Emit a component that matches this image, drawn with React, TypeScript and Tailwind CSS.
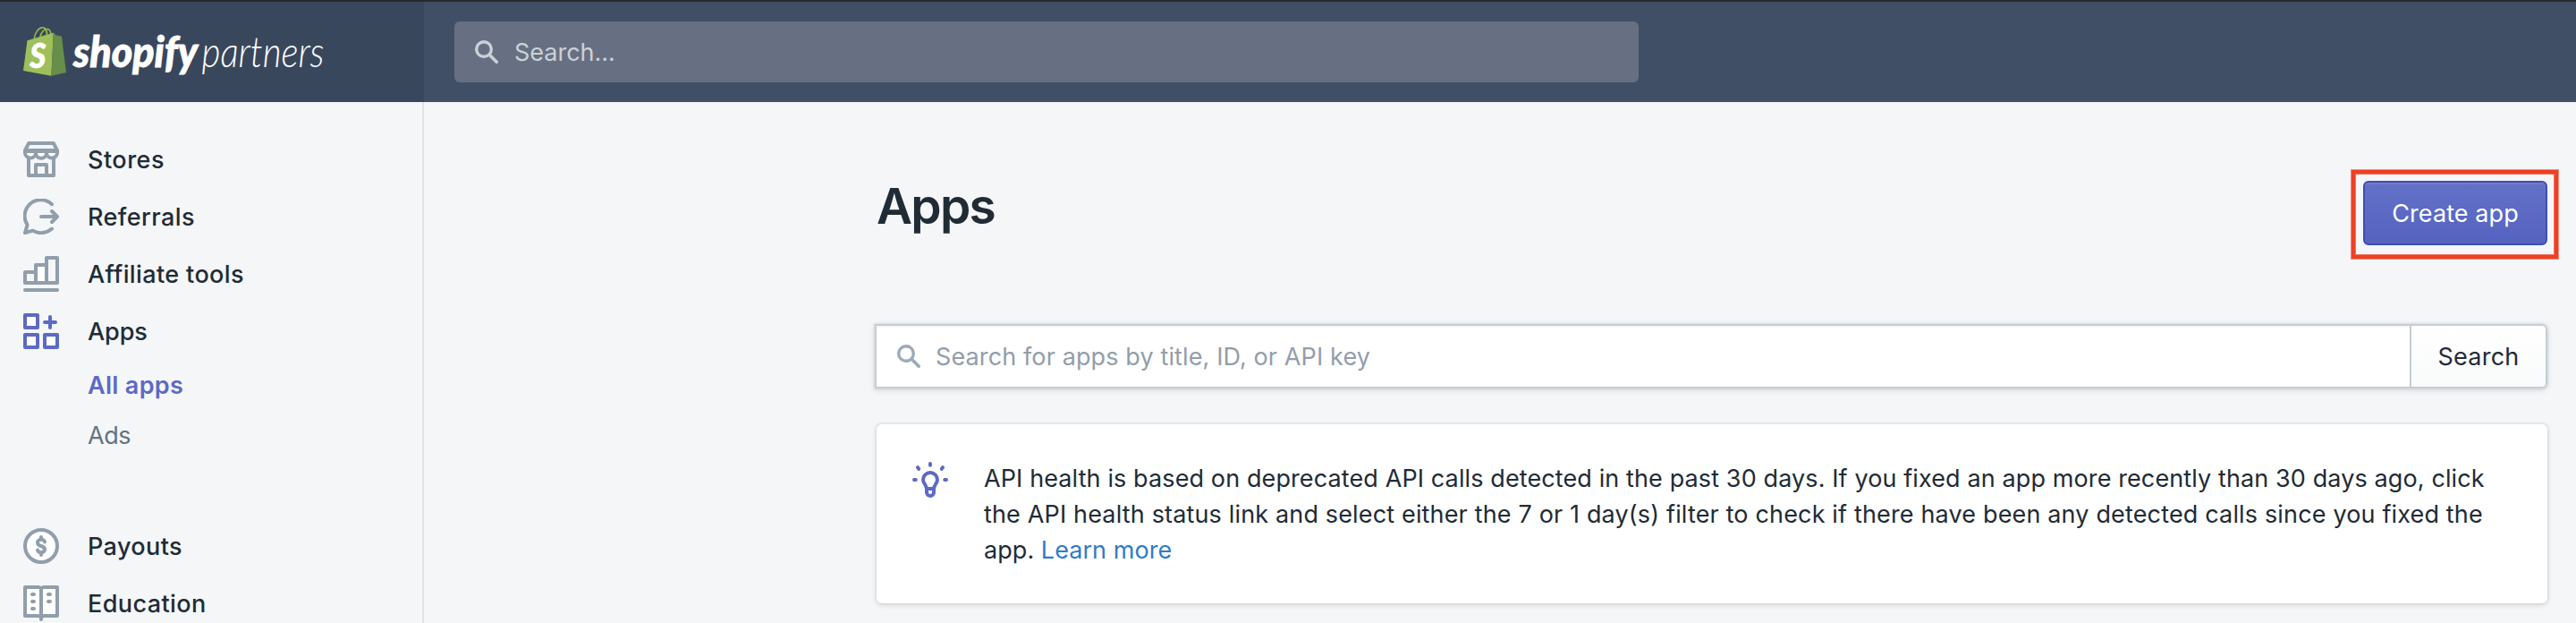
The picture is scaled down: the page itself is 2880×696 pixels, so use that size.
import type { ReactNode } from "react";

function Icon({ children, className = "" }: { children: ReactNode; className?: string }) {
  return (
    <svg
      viewBox="0 0 20 20"
      fill="none"
      stroke="currentColor"
      strokeWidth="2"
      strokeLinecap="round"
      strokeLinejoin="round"
      className={`size-10 shrink-0 ${className}`}
    >
      {children}
    </svg>
  );
}

function StoreIcon() {
  return (
    <Icon>
      <path d="M3 9v10h14V9" />
      <path d="M7 19v-6h6v6" />
      <path d="M1 5.5V6a3 3 0 0 0 6 .4 3 3 0 0 0 6 0A3 3 0 0 0 19 6v-.5z" fill="#fff" />
      <path d="M3.1 1h13.8L19 5H1z" fill="#f4f6f8" />
    </Icon>
  );
}

function ReferralIcon() {
  return (
    <Icon>
      <path d="M16 3.1A9 9 0 0 0 2.3 14.6L1 19l4.4-1.2A9 9 0 0 0 16 16.8" />
      <path d="M10 10h8.5M16 7l3 3-3 3" />
    </Icon>
  );
}

function BarsIcon() {
  return (
    <Icon>
      <path d="M1 9h6v6H1z" />
      <path d="M7 5h6v10H7z" fill="#fff" />
      <path d="M13 1h6v14h-6z" />
      <path d="M1 19h18" />
    </Icon>
  );
}

function AppsIcon() {
  return (
    <Icon className="text-[#5c6ac4]">
      <path d="M1 1h7v7H1zM1 12h7v7H1zM12 12h7v7h-7z" fill="#fff" />
      <path d="M15 2v6M12 5h6" />
    </Icon>
  );
}

function PayoutIcon() {
  return (
    <Icon>
      <circle cx="10" cy="10" r="9" fill="#fff" />
      <path d="M12 7.7C11.7 6.9 11 6.4 10 6.4c-1.200 0-2 .7-2 1.700 0 2.500 4 1.300 4 3.800 0 1-.8 1.700-2 1.700-1 0-1.700-.5-2-1.300M10 5v1.200M10 13.800V15" />
    </Icon>
  );
}

function BookIcon() {
  return (
    <Icon>
      <path d="M1 1h7.500q1 0 1.500.8.5-.8 1.500-.8H19v16h-7.500q-1 0-1.500 1-.5-1-1.500-1H1z" fill="#fff" />
      <path d="M10 2v17M5 5h1M5 9h1M5 13h1M14 5h1M14 9h1" />
    </Icon>
  );
}

function BulbIcon() {
  return (
    <Icon className="mt-0.5 text-[#5c6ac4]">
      <path d="M1 10h.9M18.100 10h.9M10 1v.9M3 3.100l.6.8M17 3.100l-.6.8" />
      <path d="M8 15c0-2-2-3-2-5a4 4 0 0 1 8 0c0 2-2 3-2 5z" />
      <path d="M8 15v2a2 2 0 0 0 4 0v-2" />
    </Icon>
  );
}

function SearchIcon({ className }: { className: string }) {
  return (
    <svg viewBox="0 0 26 26" fill="none" stroke="currentColor" strokeLinecap="round" className={`size-[26px] shrink-0 ${className}`}>
      <circle cx="10" cy="10" r="8.300" strokeWidth="3.400" />
      <path d="M16.500 16.500l7.700 7.700" strokeWidth="3.600" />
    </svg>
  );
}

function Logo() {
  return (
    <svg viewBox="0 0 420 84" className="h-[84px] w-[420px]" fill="#fff">
      <g transform="translate(-20 -12)">
        <path
          d="M38.200 43c.8-6 5-12.200 9.300-12.200 3.500 0 5 3.400 5 7.500M44.800 41.500c.8-4.800 4.300-9 7.700-9 2.600 0 4 2.500 4.300 5.200M52.300 40c.2-3.500-.2-6-1.700-7.500"
          fill="none"
          stroke="#95bf47"
          strokeWidth="1.600"
        />
        <path d="M30.500 45.300L59.800 36.600 57.400 84.800 26 79z" fill="#9fbf5a" />
        <path d="M59.800 36.600L62.400 39.300 68.900 40.500 74 81.100 57.400 84.800z" fill="#688e49" />
        <text x="33.200" y="75.600" fontSize="38" textLength="18" lengthAdjust="spacingAndGlyphs" stroke="#fff" strokeWidth="0.800" className="font-['Lato',sans-serif] font-black italic">
          S
        </text>
        <text x="82" y="75.300" fontSize="48" textLength="139" lengthAdjust="spacingAndGlyphs" stroke="#fff" strokeWidth="0.900" className="font-['Lato',sans-serif] font-black italic">
          shopify
        </text>
        <text x="225.500" y="75.300" fontSize="47" textLength="137" lengthAdjust="spacingAndGlyphs" className="font-['Lato',sans-serif] font-light italic">
          partners
        </text>
      </g>
    </svg>
  );
}

function NavItem({ icon, children, className }: { icon: ReactNode; children: string; className: string }) {
  return (
    <a className="flex h-16 items-center gap-8 pl-[26px] text-[#919eab]">
      {icon}
      <span className={`pt-0.5 font-medium text-[#212b36] ${className}`}>{children}</span>
    </a>
  );
}

export default function App() {
  return (
    <div className="flex h-[696px] w-[2880px] flex-col overflow-hidden bg-[#f4f6f8] font-['Inter',sans-serif] text-[27px] leading-10 text-[#212b36]">
      <header className="flex h-[114px] shrink-0 border-t-2 border-[#292929] bg-[#414f66]">
        <div className="flex w-[474px] items-start bg-[#39475d] pt-2.5 pl-5">
          <Logo />
        </div>
        <div className="mt-[22px] ml-[34px] flex h-[68px] w-[1324px] items-center rounded-md bg-[#667082] pl-[23px] text-[#cdd0d7]">
          <SearchIcon className="" />
          <span className="ml-[18px] pt-0.5 tracking-[-0.02px]">Search...</span>
        </div>
      </header>

      <div className="flex min-h-0 flex-1">
        <nav className="w-[474px] shrink-0 overflow-hidden border-r-2 border-[#dfe3e8] pt-8">
          <NavItem icon={<StoreIcon />} className="tracking-[0.5px]">Stores</NavItem>
          <NavItem icon={<ReferralIcon />} className="tracking-[0.42px]">Referrals</NavItem>
          <NavItem icon={<BarsIcon />} className="tracking-[0.38px]">Affiliate tools</NavItem>
          <NavItem icon={<AppsIcon />} className="tracking-[-0.1px]">Apps</NavItem>
          <a className="flex h-14 items-center pt-0.5 pl-[98px] font-semibold tracking-[0.32px] text-[#5c6ac4]">All apps</a>
          <a className="flex h-14 items-center pt-0.5 pl-[98px] tracking-[-0.5px] text-[#637381]">Ads</a>
          <div className="mt-16">
            <NavItem icon={<PayoutIcon />} className="tracking-[0.39px]">Payouts</NavItem>
            <NavItem icon={<BookIcon />} className="tracking-[0.4px]">Education</NavItem>
          </div>
        </nav>

        <main className="flex-1 pr-8 pl-[506px]">
          <div className="flex items-start justify-between pt-[88px]">
            <h1 className="text-[55px] leading-[56px] font-semibold tracking-[-1.7px]">Apps</h1>
            <div className="relative">
              <button className="flex h-[72px] w-[206px] items-center justify-center rounded-md border-2 border-[#3f4eae] bg-gradient-to-b from-[#6371c7] to-[#5563c1] pt-0.5 tracking-[0.09px] text-white shadow-[inset_0_2px_0_#6f7bcb]">
                Create app
              </button>
              <div className="pointer-events-none absolute -top-3 -right-3 -bottom-[15px] -left-[13px] border-4 border-[#ee4023] shadow-[0_0_0_1px_#f08d7d,inset_0_0_0_1px_#f3705b]" />
            </div>
          </div>

          <div className="mt-[88px] -ml-0.5 flex h-[72px] rounded-r-md bg-white shadow-[0_0_0_2px_rgba(63,63,68,0.05),0_2px_6px_rgba(63,63,68,0.15)]">
            <div className="flex flex-1 items-center border-2 border-r-0 border-[#c4cdd5] pl-[23px] text-[#919eab] shadow-[inset_0_2px_0_#f7f8f9]">
              <SearchIcon className="text-[#9caab9]" />
              <span className="ml-[17px] pt-0.5 tracking-[0.12px]">Search for apps by title, ID, or API key</span>
            </div>
            <button className="flex w-[154px] items-center justify-center rounded-r-md border-2 border-[#c4cdd5] bg-gradient-to-b from-white to-[#f9fafb] pt-0.5 tracking-[0.27px]">
              Search
            </button>
          </div>

          <section className="mt-10 flex h-[200px] gap-10 rounded-md bg-white px-10 pt-10 whitespace-nowrap shadow-[0_0_0_2px_rgba(63,63,68,0.05),0_2px_6px_rgba(63,63,68,0.15)]">
            <BulbIcon />
            <p className="mt-px">
              <span className="block tracking-[0.11px]">
                API health is based on deprecated API calls detected in the past 30 days. If you fixed an app more recently than 30 days ago, click
              </span>
              <span className="block tracking-[0.155px]">
                the API health status link and select either the 7 or 1 day(s) filter to check if there have been any detected calls since you fixed the
              </span>
              <span className="block tracking-[0.05px]">
                app. <a className="text-[#2f7bcb]">Learn more</a>
              </span>
            </p>
          </section>
        </main>
      </div>
    </div>
  );
}
